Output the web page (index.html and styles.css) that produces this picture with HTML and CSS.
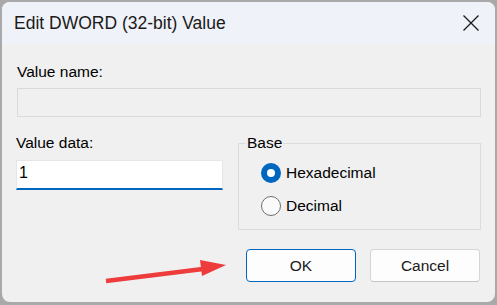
FILE: index.html
```html
<!DOCTYPE html>
<html>
<head>
<meta charset="utf-8">
<link rel="stylesheet" href="styles.css">
</head>
<body>
<div class="window">
  <div class="titlebar">
    <span class="title">Edit DWORD (32-bit) Value</span>
    <svg class="close" width="16" height="16" viewBox="0 0 16 16"><path d="M0.5 0.5 L15.5 15.5 M15.5 0.5 L0.5 15.5" stroke="#1a1a1a" stroke-width="1.3" fill="none"/></svg>
  </div>
  <div class="content">
    <div class="label name-label">Value name:</div>
    <div class="input disabled"></div>
    <div class="row">
      <div class="data-col">
        <div class="label">Value data:</div>
        <div class="input active">1</div>
      </div>
      <fieldset class="group">
        <legend>Base</legend>
        <div class="radio-row first">
          <span class="radio checked"></span><span class="rtext">Hexadecimal</span>
        </div>
        <div class="radio-row">
          <span class="radio"></span><span class="rtext">Decimal</span>
        </div>
      </fieldset>
    </div>
    <div class="buttons">
      <div class="btn default">OK</div>
      <div class="btn">Cancel</div>
    </div>
  </div>
  <svg class="arrow" width="130" height="30" viewBox="0 0 130 30"><path d="M3 23 L108 10" stroke="#ee3b3b" stroke-width="4.5" fill="none"/><path d="M97 2 L123 7 L99 18 Z" fill="#ee3b3b"/></svg>
</div>
</body>
</html>
```
FILE: styles.css
```css
html, body {
  margin: 0;
  padding: 0;
}
body {
  background: #a9a9a9;
  width: 497px;
  height: 305px;
  padding: 2px 2px 3px 2px;
  box-sizing: border-box;
  font-family: "Liberation Sans", Arial, sans-serif;
  color: #000;
}
.window {
  position: relative;
  width: 493px;
  height: 300px;
  border-radius: 8px;
  overflow: hidden;
  background: #f0f0f0;
  display: flex;
  flex-direction: column;
}
.titlebar {
  height: 42px;
  flex: none;
  box-sizing: border-box;
  background: #eff2f8;
  display: flex;
  align-items: center;
  justify-content: space-between;
  padding: 0 16px 0 12px;
}
.title {
  font-size: 17.5px;
  line-height: 20px;
  color: #1a1a1a;
}
.close {
  display: block;
}
.content {
  padding: 19px 14px 0 15px;
  display: flex;
  flex-direction: column;
}
.label {
  font-size: 15.5px;
  line-height: 18px;
}
.input {
  box-sizing: border-box;
  height: 29px;
  font-size: 16px;
  line-height: 24px;
  padding-left: 2px;
}
.input.disabled {
  margin-top: 7px;
  border: 1px solid #dadada;
  background: #f0f0f0;
}
.row {
  display: flex;
  justify-content: space-between;
  align-items: flex-start;
  margin-top: 17px;
}
.data-col {
  width: 207px;
  display: flex;
  flex-direction: column;
  margin-left: -1px;
}
.input.active {
  margin-top: 8px;
  height: 30px;
  background: #fff;
  border: 1px solid #e6e6e6;
  border-bottom: 2px solid #0067c0;
}
.group {
  margin: 1px 0 0 0;
  padding: 0 0 0 22px;
  width: 243px;
  height: 95px;
  box-sizing: border-box;
  border: 1px solid #dcdcdc;
  border-radius: 0;
}
.group legend {
  font-size: 15.5px;
  padding: 0 1px;
  margin-left: -15px;
  line-height: 16px;
}
.radio-row {
  display: flex;
  align-items: center;
  height: 33px;
}
.radio-row.first {
  margin-top: 5px;
}
.radio {
  width: 20px;
  height: 20px;
  box-sizing: border-box;
  border-radius: 50%;
  border: 1px solid #6e6e6e;
  background: #fafafa;
  flex: none;
}
.radio.checked {
  border: 6.5px solid #0067c0;
  background: #fff;
}
.rtext {
  font-size: 15.5px;
  margin-left: 5px;
}
.buttons {
  display: flex;
  justify-content: flex-end;
  gap: 14px;
  margin-top: 19px;
  margin-right: 1px;
}
.btn {
  width: 110px;
  height: 33px;
  box-sizing: border-box;
  border: 1px solid #d5d5d5;
  border-bottom-color: #c4c4c4;
  border-radius: 4px;
  background: #fdfdfd;
  font-size: 15.5px;
  display: flex;
  align-items: center;
  justify-content: center;
  color: #1a1a1a;
}
.btn.default {
  border: 1px solid #0067c0;
}
.arrow {
  position: absolute;
  left: 101px;
  top: 256px;
}
```
